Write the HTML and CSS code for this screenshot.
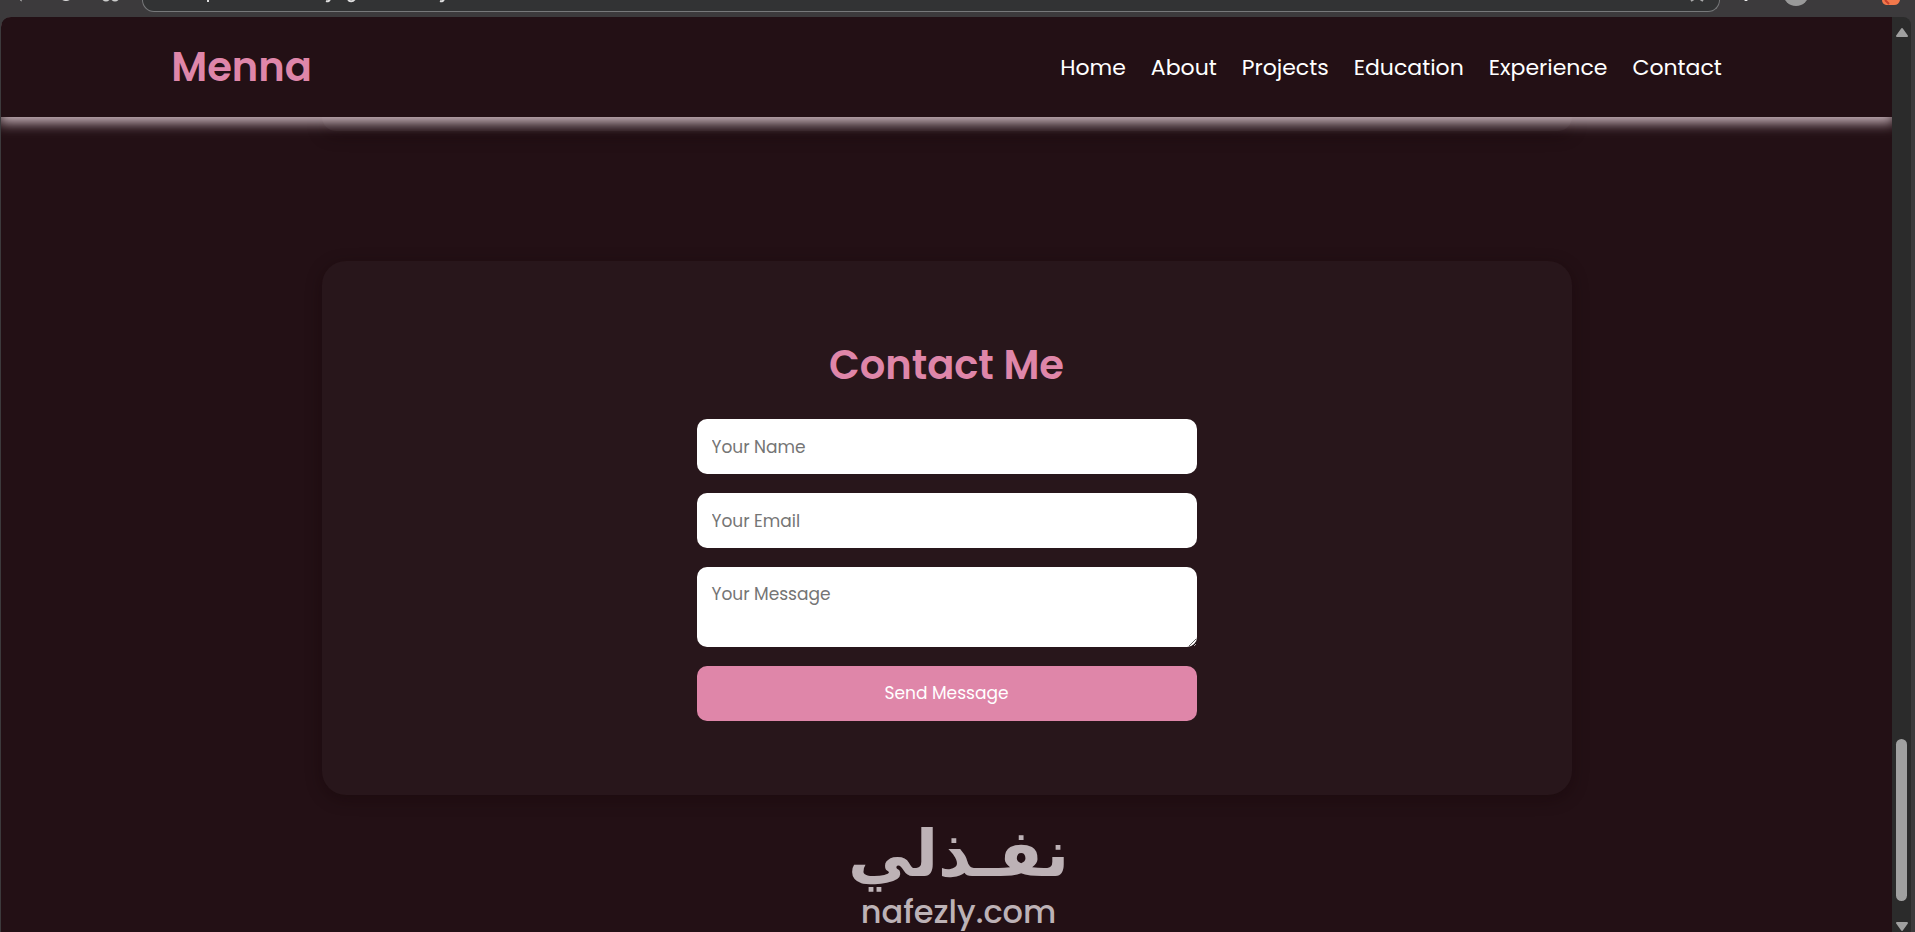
FILE: index.html
```html
<!DOCTYPE html>
<html lang="en">
<head>
    <meta charset="UTF-8">
    <meta name="viewport" content="width=device-width, initial-scale=1.0">
    <title>Menna</title>
    <link rel="stylesheet" href="styles.css">
</head>
<body>
    <!-- Browser toolbar -->
    <div class="toolbar">
        <div class="toolbar-left">
            <svg class="toolbar-icons" width="142" height="16" viewBox="0 0 142 16">
                <path d="M20 0l2 1" stroke="#aaa" stroke-width="1" />
                <path d="M60 -3q6 6 12 0" fill="none" stroke="#ddd" stroke-width="2" />
                <path d="M102 -2q4 5 8 0M111 -2q4 5 8 0" fill="none" stroke="#ccc" stroke-width="2" />
            </svg>
        </div>
        <div class="address-bar">
            <svg class="toolbar-icons" width="340" height="12" viewBox="0 0 340 12">
                <path d="M65 0v2M187 -1q-1 3-4 2M212 -1q-3 4-7 1M301 -1q-1 3-4 2" fill="none" stroke="#ddd" stroke-width="2" />
            </svg>
            <svg class="toolbar-icons" width="20" height="12" viewBox="0 0 20 12">
                <path d="M4 1l3-2M16 1l-3-2" fill="none" stroke="#aaa" stroke-width="2" />
            </svg>
        </div>
        <div class="toolbar-right">
            <svg class="toolbar-icons" width="195" height="16" viewBox="0 0 195 16">
                <circle cx="26" cy="-1" r="2" fill="#fff" />
                <circle cx="76" cy="-7" r="13" fill="#999" />
                <path d="M162 0h18q-1 5-6 5h-8q-4-1-4-5z" fill="#f2784b" />
                <path d="M165 0l4 4" stroke="#c8402c" stroke-width="2" />
            </svg>
        </div>
    </div>

    <div class="window">
        <div class="page">
            <header class="header">
                <a href="#home" class="logo">Menna</a>
                <nav class="navbar">
                    <a href="#home">Home</a>
                    <a href="#about">About</a>
                    <a href="#projects">Projects</a>
                    <a href="#education">Education</a>
                    <a href="#experience">Experience</a>
                    <a href="#contact">Contact</a>
                </nav>
            </header>

            <!-- End of the experience section -->
            <section class="experience" id="experience"></section>

            <section class="contact" id="contact">
                <h2>Contact Me</h2>
                <form class="contact-form">
                    <input type="text" name="name" placeholder="Your Name" aria-label="Your Name" required>
                    <input type="email" name="email" placeholder="Your Email" aria-label="Your Email" required>
                    <textarea name="message" placeholder="Your Message" aria-label="Your Message" required></textarea>
                    <button type="submit">Send Message</button>
                </form>
            </section>

            <div class="watermark">
                <span class="watermark-ar" lang="ar" dir="rtl">نفـذلي</span>
                <span class="watermark-en">nafezly.com</span>
            </div>
        </div>

        <!-- Scrollbar -->
        <div class="scrollbar">
            <svg width="14" height="11" viewBox="0 0 14 11"><path d="M7 2l5 7H2z" fill="#a0a0a0" stroke="#a0a0a0" stroke-width="2" stroke-linejoin="round" /></svg>
            <div class="scroll-thumb"></div>
            <svg width="14" height="11" viewBox="0 0 14 11"><path d="M7 9l5-7H2z" fill="#a0a0a0" stroke="#a0a0a0" stroke-width="2" stroke-linejoin="round" /></svg>
        </div>
    </div>
</body>
</html>
```

FILE: styles.css
```css
* {
    margin: 0;
    padding: 0;
    box-sizing: border-box;
    font-family: Poppins, Inter, sans-serif;
}
body {
    display: flex;
    flex-direction: column;
    height: 100vh;
    overflow: hidden;
    background-color: #3c3a3c;
}

/* Toolbar */
.toolbar {
    display: flex;
    flex: none;
    height: 17px;
    background-color: #3c3a3c;
}
.toolbar-left {
    width: 142px;
}
.toolbar-right {
    width: 195px;
}
.toolbar-icons {
    display: block;
}
.address-bar {
    flex: 1;
    display: flex;
    justify-content: space-between;
    height: 12px;
    padding-right: 12px;
    background-color: #323334;
    border: 1px solid #77787a;
    border-top: none;
    border-radius: 0 0 16px 16px;
}

/* Window */
.window {
    flex: 1;
    display: flex;
    min-height: 0;
    padding-left: 1px;
}
.page {
    flex: 1;
    position: relative;
    overflow: hidden;
    background-color: #231015;
    border-top-left-radius: 10px;
}
.header {
    position: relative;
    display: flex;
    justify-content: space-between;
    align-items: center;
    height: 100px;
    padding: 0 9%;
    background-color: #231015;
    box-shadow: 0 4px 12px 2px rgba(255, 235, 243, 0.75);
}
.logo {
    color: #df86a9;
    font-size: 40px;
    font-weight: 600;
    text-decoration: none;
}
.navbar {
    display: flex;
    gap: 25px;
}
.navbar a {
    color: #fff;
    font-size: 22px;
    font-weight: 400;
    text-decoration: none;
}

/* Sections */
.experience,
.contact {
    max-width: 1250px;
    margin: 0 auto;
    background-color: #28161b;
    border-radius: 24px;
    box-shadow: 0 4px 16px rgba(20, 4, 8, 0.4);
}
.experience {
    height: 14px;
    margin-bottom: 130px;
    border-radius: 0 0 24px 24px;
}
.contact {
    padding: 74px 32px;
}
.contact h2 {
    margin-bottom: 24px;
    color: #df86a9;
    font-size: 40px;
    font-weight: 600;
    line-height: 60px;
    text-align: center;
}
.contact-form {
    display: flex;
    flex-direction: column;
    gap: 19px;
    max-width: 500px;
    margin: 0 auto;
}
.contact-form input,
.contact-form textarea,
.contact-form button {
    width: 100%;
    height: 55px;
    padding: 15px;
    border: none;
    border-radius: 10px;
    font-size: 17px;
    line-height: 25px;
}
.contact-form textarea {
    height: 80px;
    resize: vertical;
}
.contact-form ::placeholder {
    color: #757575;
}
.contact-form button {
    background-color: #df86a9;
    color: #fff;
    cursor: pointer;
}

/* Watermark */
.watermark {
    position: absolute;
    left: 50%;
    bottom: 0;
    display: flex;
    flex-direction: column;
    align-items: center;
    transform: translateX(-50%);
    margin-left: 12px;
    color: #bdb2b6;
}
.watermark-ar {
    font-family: "DejaVu Sans", sans-serif;
    font-size: 65px;
    font-weight: 700;
    line-height: 76px;
}
.watermark-en {
    font-size: 32px;
    font-weight: 500;
    line-height: 40px;
}

/* Scrollbar */
.scrollbar {
    display: flex;
    flex-direction: column;
    align-items: center;
    width: 19px;
    margin-right: 4px;
    padding-top: 10px;
    background-color: #2b2b2b;
    border-top-right-radius: 8px;
}
.scroll-thumb {
    width: 11px;
    height: 162px;
    margin-top: auto;
    margin-bottom: 20px;
    background-color: #a0a0a0;
    border-radius: 6px;
}
```
